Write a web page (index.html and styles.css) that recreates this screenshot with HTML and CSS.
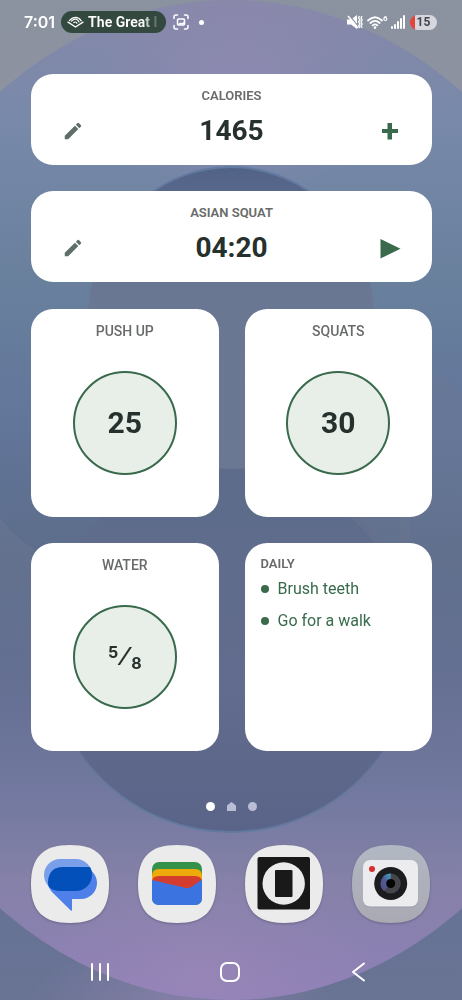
FILE: index.html
```html
<!DOCTYPE html>
<html lang="en">
<head>
    <meta charset="UTF-8">
    <meta name="viewport" content="width=device-width, initial-scale=1.0">
    <title>Home screen</title>
    <link rel="stylesheet" href="styles.css">
</head>
<body>
    <!-- wallpaper -->
    <svg class="wallpaper" viewBox="0 0 462 1000" preserveAspectRatio="none" aria-hidden="true">
        <defs>
            <linearGradient id="outer" x1="0" y1="0" x2="0" y2="1">
                <stop offset="0" stop-color="#8a919f"/>
                <stop offset=".1" stop-color="#8e93a1"/>
                <stop offset=".9" stop-color="#667395"/>
                <stop offset="1" stop-color="#697394"/>
            </linearGradient>
            <linearGradient id="big" x1="0" y1="0" x2="0" y2="1">
                <stop offset="0" stop-color="#8788aa"/>
                <stop offset=".12" stop-color="#7889a9"/>
                <stop offset=".28" stop-color="#69809d"/>
                <stop offset=".42" stop-color="#62769a"/>
                <stop offset=".55" stop-color="#5d6d8b"/>
                <stop offset=".68" stop-color="#646f92"/>
                <stop offset=".8" stop-color="#7379a0"/>
                <stop offset=".88" stop-color="#8581a8"/>
                <stop offset="1" stop-color="#8f80b8"/>
            </linearGradient>
            <linearGradient id="upper" x1="0" y1="0" x2="0" y2="1">
                <stop offset="0" stop-color="#526388"/>
                <stop offset=".4" stop-color="#6a7792"/>
                <stop offset="1" stop-color="#6a7893"/>
            </linearGradient>
            <linearGradient id="lower" x1="0" y1="0" x2="0" y2="1">
                <stop offset="0" stop-color="#5d6c8a"/>
                <stop offset=".6" stop-color="#626c8e"/>
                <stop offset="1" stop-color="#596488"/>
            </linearGradient>
            <linearGradient id="rim" x1="0" y1="0" x2="0" y2="1">
                <stop offset=".6" stop-color="#62799f" stop-opacity="0"/>
                <stop offset="1" stop-color="#62799f"/>
            </linearGradient>
            <linearGradient id="topRim" x1="0" y1="0" x2="0" y2="1">
                <stop offset="0" stop-color="#6279a0"/>
                <stop offset=".4" stop-color="#6279a0" stop-opacity="0"/>
            </linearGradient>
            <linearGradient id="wave" x1="0" y1="0" x2="0" y2="1">
                <stop offset="0" stop-color="#6c7894" stop-opacity=".5"/>
                <stop offset="1" stop-color="#6c7894" stop-opacity="0"/>
            </linearGradient>
            <radialGradient id="glow">
                <stop offset="0" stop-color="#a08ab8" stop-opacity=".5"/>
                <stop offset="1" stop-color="#a08ab8" stop-opacity="0"/>
            </radialGradient>
            <clipPath id="clip"><ellipse cx="231" cy="500" rx="400" ry="500"/></clipPath>
        </defs>
        <rect width="462" height="1000" fill="url(#outer)"/>
        <ellipse cx="180" cy="1000" rx="150" ry="60" fill="url(#glow)"/>
        <g clip-path="url(#clip)">
            <rect width="462" height="1000" fill="url(#big)"/>
            <ellipse cx="240" cy="90" rx="150" ry="110" fill="url(#glow)"/>
            <ellipse cx="200" cy="980" rx="180" ry="110" fill="url(#glow)"/>
            <path d="M400 355Q440 370 462 394V800H400Z" fill="url(#wave)"/>
            <path d="M0 518Q15 538 36 550V700H0Z" fill="url(#wave)"/>
        </g>
        <circle cx="231" cy="648" r="184" fill="url(#lower)" stroke="url(#rim)" stroke-width="2"/>
        <path d="M346 514Q362 526 376 546H410V514Z" fill="#6c7891" opacity=".4"/>
        <ellipse cx="231" cy="318" rx="143" ry="151" fill="url(#upper)" stroke="url(#topRim)" stroke-width="2"/>
    </svg>

    <!-- status bar -->
    <header class="status">
        <span class="time">7:01</span>
        <div class="pill">
            <svg width="17" height="12" viewBox="0 0 17 12" fill="none" stroke="#fff" stroke-width="1.4" stroke-linejoin="round" stroke-linecap="round">
                <path d="M1 6.200L8.500 11L16 6.200"/>
                <path d="M2.500 4.500C6 .500 11 0 14.200 4.800M4.500 5.200C7.500 2 10.500 2.800 12 6M6.800 6.600C8.300 5.500 9.200 6 9.900 7.300" stroke-width="1.200"/>
            </svg>
            <span class="pill-text">The Great I</span>
        </div>
        <svg class="shot" width="16" height="16" viewBox="0 0 16 16" fill="none" stroke="#fff" stroke-width="1.5" stroke-linecap="round">
            <path d="M1 4.500V3Q1 1 3 1H4.500M11.500 1H13Q15 1 15 3V4.500M15 11.500V13Q15 15 13 15H11.500M4.500 15H3Q1 15 1 13V11.500"/>
            <rect x="4.500" y="5" width="7" height="6" rx="1"/>
            <path d="M5 10L7.500 8.500L9 9.300L11 7.500V10.500H5Z" fill="#fff" stroke="none"/>
        </svg>
        <span class="more"></span>

        <div class="status-right">
            <svg width="16" height="14" viewBox="0 0 16 14" fill="#fff">
                <path d="M0 4.500H4L10 0V14L4 9.500H0Z"/>
                <path d="M2 0L11 11" stroke="#8d8fae" stroke-width="1.200"/>
                <path d="M1 1L11 13" stroke="#fff" stroke-width="1.500"/>
                <path d="M12.500 1L11.500 3L13 5L11.500 7L13 9L11.500 11L13 13M15 1L14 3L15.200 5L14 7L15.200 9L14 11L15.200 13" fill="none" stroke="#fff" stroke-width="1.300"/>
            </svg>
            <svg class="wifi" width="16" height="13" viewBox="0 0 16 13" fill="none" stroke="#fff" stroke-width="1.800" stroke-linecap="round">
                <path d="M1 4.500Q8 -2 15 4.500M3.400 7Q8 2.800 12.600 7M5.700 9.400Q8 7.400 10.300 9.400"/>
                <circle cx="8" cy="11.600" r="1.300" fill="#fff" stroke="none"/>
            </svg>
            <span class="wifi-gen">6</span>
            <svg width="15" height="14" viewBox="0 0 15 14" fill="#fff">
                <rect x="0" y="11" width="2" height="3" rx="1"/>
                <rect x="3" y="9" width="2" height="5" rx="1"/>
                <rect x="6" y="6" width="2" height="8" rx="1"/>
                <rect x="9" y="3" width="2" height="11" rx="1"/>
                <rect x="12" y="0" width="2" height="14" rx="1"/>
            </svg>
            <span class="battery">15</span>
        </div>
    </header>

    <!-- widgets -->
    <main class="widgets">
        <section class="card wide">
            <h2>CALORIES</h2>
            <div class="wide-row">
                <button class="icon-btn" aria-label="Edit calories">
                    <svg width="22" height="22" viewBox="0 0 24 24" fill="#5f6e68"><path d="M3 17.250V21h3.750L17.810 9.940l-3.750-3.750L3 17.250zM20.710 7.040a1 1 0 0 0 0-1.410l-2.340-2.340a1 1 0 0 0-1.410 0l-1.830 1.830 3.750 3.750 1.830-1.830z"/></svg>
                </button>
                <span class="value">1465</span>
                <button class="icon-btn" aria-label="Add calories">
                    <svg width="22" height="22" viewBox="0 0 22 22" fill="#386a4b"><path d="M8.500 3H13V9H19V13H13V19.500H8.500V13H3V9H8.500Z"/></svg>
                </button>
            </div>
        </section>

        <section class="card wide">
            <h2>ASIAN SQUAT</h2>
            <div class="wide-row">
                <button class="icon-btn" aria-label="Edit timer">
                    <svg width="22" height="22" viewBox="0 0 24 24" fill="#5f6e68"><path d="M3 17.250V21h3.750L17.810 9.940l-3.750-3.750L3 17.250zM20.710 7.040a1 1 0 0 0 0-1.410l-2.340-2.340a1 1 0 0 0-1.410 0l-1.830 1.830 3.750 3.750 1.830-1.830z"/></svg>
                </button>
                <span class="value">04:20</span>
                <button class="icon-btn" aria-label="Start timer">
                    <svg width="22" height="22" viewBox="0 0 22 22" fill="#386a4b"><path d="M1.500 2L21.500 11.800L1.500 21.500Z"/></svg>
                </button>
            </div>
        </section>

        <div class="grid">
            <section class="card square">
                <h2>PUSH UP</h2>
                <div class="center"><button class="counter">25</button></div>
            </section>
            <section class="card square">
                <h2>SQUATS</h2>
                <div class="center"><button class="counter">30</button></div>
            </section>
            <section class="card square">
                <h2>WATER</h2>
                <div class="center">
                    <button class="counter fraction"><span class="num">5</span><span class="slash">⁄</span><span class="den">8</span></button>
                </div>
            </section>
            <section class="card daily">
                <h2>DAILY</h2>
                <ul>
                    <li>Brush teeth</li>
                    <li>Go for a walk</li>
                </ul>
            </section>
        </div>
    </main>

    <!-- page indicator -->
    <div class="pages">
        <span class="dot active"></span>
        <svg width="9" height="9" viewBox="0 0 9 9" fill="#b9bdd5"><path d="M4.500 0L9 3.500V8.500Q9 9 8.500 9H.500Q0 9 0 8.500V3.500Z"/></svg>
        <span class="dot"></span>
    </div>

    <!-- dock -->
    <nav class="dock">
        <a href="#" aria-label="Messages">
            <svg width="78" height="78" viewBox="0 0 78 78">
                <path class="tile" d="M39 0C66 0 78 12 78 39S66 78 39 78 0 66 0 39 12 0 39 0Z"/>
                <rect x="13" y="14" width="48" height="32" rx="16" fill="#7a9fea"/>
                <path d="M33 22H50A16 16 0 0 1 50 54H41V64.500Q41 66.500 39.500 65.200L21 47Q17 42 17 38Q17 22 33 22Z" fill="#4f80ea"/>
                <path d="M32 22H59Q61 25 61 30A16 16 0 0 1 45 46H29Q22 46 18 42Q17 40 17 37Q18 22 32 22Z" fill="#0450ba"/>
            </svg>
        </a>
        <a href="#" aria-label="Wallet">
            <svg width="78" height="78" viewBox="0 0 78 78">
                <path class="tile" d="M39 0C66 0 78 12 78 39S66 78 39 78 0 66 0 39 12 0 39 0Z"/>
                <rect x="14" y="17" width="50" height="43" rx="7" fill="#339149"/>
                <path d="M14 31Q14 24 21 24H57Q64 24 64 31V45H14Z" fill="#eeaa0b"/>
                <path d="M14 37Q14 31 21 31H57Q64 31 64 37V50H14Z" fill="#d43d2e"/>
                <path d="M14 35L48 43Q51 43.500 54 41.500L64 34.500V53Q64 60 57 60H21Q14 60 14 53Z" fill="#3b74e0"/>
            </svg>
        </a>
        <a href="#" aria-label="Launcher">
            <svg width="78" height="78" viewBox="0 0 78 78">
                <path class="tile" d="M39 0C66 0 78 12 78 39S66 78 39 78 0 66 0 39 12 0 39 0Z"/>
                <rect x="12.500" y="12" width="52.500" height="52.500" rx="2" fill="#191919"/>
                <circle cx="38.700" cy="38.500" r="21.200" fill="#ebebeb"/>
                <rect x="30" y="25" width="17.500" height="27" rx="1" fill="#191919"/>
            </svg>
        </a>
        <a href="#" aria-label="Camera">
            <svg width="78" height="78" viewBox="0 0 78 78">
                <defs>
                    <linearGradient id="cam" x1="0" y1="0" x2="0" y2="1">
                        <stop offset="0" stop-color="#b2b8c3"/>
                        <stop offset="1" stop-color="#a9a9b3"/>
                    </linearGradient>
                    <linearGradient id="lens" x1="1" y1="0" x2="0" y2="1">
                        <stop offset="0" stop-color="#3fa6c4"/>
                        <stop offset=".5" stop-color="#4c5a94"/>
                        <stop offset="1" stop-color="#5b4a86"/>
                    </linearGradient>
                </defs>
                <path d="M39 0C66 0 78 12 78 39S66 78 39 78 0 66 0 39 12 0 39 0Z" fill="url(#cam)"/>
                <rect x="11" y="16" width="55" height="46.500" rx="7" fill="#9a9ca5"/>
                <rect x="11" y="15" width="55" height="46.500" rx="7" fill="#ececee"/>
                <circle cx="20" cy="24" r="3" fill="#d62f2f"/>
                <circle cx="38.700" cy="38.500" r="16.500" fill="#1b1c1e"/>
                <circle cx="38.700" cy="38.500" r="10" fill="#45464b"/>
                <path d="M38.700 38.500V28.500A10 10 0 0 0 32 46Z" fill="url(#lens)"/>
                <circle cx="38.700" cy="38.500" r="4.500" fill="#050506"/>
            </svg>
        </a>
    </nav>

    <!-- system navigation -->
    <footer class="sysnav">
        <button aria-label="Recent apps"><svg width="20" height="20" viewBox="0 0 20 20" fill="none" stroke="#fff" stroke-width="2" stroke-linecap="round"><path d="M2 2V18M10 2V18M18 2V18"/></svg></button>
        <button aria-label="Home"><svg width="20" height="20" viewBox="0 0 20 20" fill="none" stroke="#fff" stroke-width="2"><rect x="1" y="1" width="18" height="18" rx="6"/></svg></button>
        <button aria-label="Back"><svg width="20" height="20" viewBox="0 0 20 20" fill="none" stroke="#fff" stroke-width="2" stroke-linecap="round" stroke-linejoin="round"><path d="M15 1.500L4 10L15 18.500"/></svg></button>
    </footer>
</body>
</html>
```
FILE: styles.css
```css
* {
    box-sizing: border-box;
}

body {
    margin: 0;
    min-height: 100vh;
    display: flex;
    flex-direction: column;
    font-family: Roboto, "Liberation Sans", sans-serif;
    color: #26302c;
}

svg {
    display: block;
}

button {
    padding: 0;
    border: none;
    background: none;
    font-family: inherit;
    color: inherit;
    cursor: pointer;
}

.wallpaper {
    position: fixed;
    z-index: -1;
    left: 0;
    top: 0;
    width: 100%;
    height: 100%;
}

/* status bar */
.status {
    display: flex;
    align-items: center;
    height: 44px;
    padding: 0 25px 0 24px;
    color: #fff;
}

.time {
    font-family: Inter, sans-serif;
    font-size: 16px;
    font-weight: 600;
}

.pill {
    display: flex;
    align-items: center;
    gap: 4px;
    width: 105px;
    height: 22px;
    margin-left: 6px;
    padding: 0 6px;
    border-radius: 11px;
    background: #33483f;
}

.pill-text {
    flex: 1;
    overflow: hidden;
    white-space: nowrap;
    font-size: 14px;
    font-weight: 700;
    background: linear-gradient(to right, #fff 76%, #33483f);
    background-clip: text;
    color: transparent;
}

.shot {
    margin-left: 7px;
}

.more {
    width: 5px;
    height: 5px;
    margin-left: 10px;
    border-radius: 50%;
    background: #fff;
}

.status-right {
    display: flex;
    align-items: center;
    margin-left: auto;
}

.wifi {
    margin-left: 4px;
}

.wifi-gen {
    align-self: flex-start;
    width: 8px;
    font-size: 8px;
    line-height: 8px;
    font-weight: 700;
}

.battery {
    width: 27px;
    height: 15px;
    margin-left: 4px;
    border-radius: 8px;
    background: linear-gradient(to right, #e5443a 5px, #d5d6de 5px);
    font-size: 12px;
    line-height: 15px;
    font-weight: 700;
    text-align: center;
    color: #44464d;
}

/* widgets */
.widgets {
    display: flex;
    flex-direction: column;
    gap: 26px;
    padding: 30px 30px 0 31px;
}

.card {
    display: flex;
    flex-direction: column;
    border-radius: 22px;
    background: #fff;
}

.card h2 {
    margin: 0;
    font-size: 13px;
    line-height: 16px;
    font-weight: 600;
    text-align: center;
    color: #686b69;
}

.wide {
    gap: 11px;
    padding: 14px 31px 18px;
}

.wide-row {
    display: flex;
    align-items: center;
    justify-content: space-between;
}

.value {
    font-size: 28px;
    line-height: 32px;
    font-weight: 700;
}

.grid {
    display: grid;
    grid-template-columns: 1fr 1fr;
    gap: 26px;
    padding-top: 1px;
}

.square,
.daily {
    min-height: 208px;
}

.square {
    padding: 14px 16px 11px;
}

.square h2 {
    font-size: 14px;
    font-weight: 500;
}

.center {
    flex: 1;
    display: flex;
    align-items: center;
    justify-content: center;
}

.counter {
    width: 104px;
    height: 104px;
    border: 2px solid #386a4b;
    border-radius: 50%;
    background: #e8eee8;
    font-size: 30px;
    font-weight: 700;
}

.fraction {
    display: flex;
    align-items: center;
    justify-content: center;
    gap: 4px;
    font-family: Inter, sans-serif;
    font-size: 16px;
}

.num {
    padding-bottom: 10px;
}

.den {
    padding-top: 12px;
}

.slash {
    font-size: 24px;
}

.daily {
    padding: 13px 16px;
    gap: 1px;
}

.daily h2 {
    text-align: left;
}

.daily ul {
    margin: 0;
    padding: 0;
    list-style: none;
}

.daily li {
    display: flex;
    align-items: center;
    gap: 9px;
    font-size: 16px;
    line-height: 32px;
    color: #386a4b;
}

.daily li::before {
    content: "";
    width: 8px;
    height: 8px;
    border-radius: 50%;
    background: #386a4b;
}

/* page indicator */
.pages {
    display: flex;
    justify-content: center;
    gap: 12px;
    padding: 51px 0 34px;
}

.dot {
    width: 9px;
    height: 9px;
    border-radius: 50%;
    background: #b9bdd5;
}

.dot.active {
    background: #fff;
}

/* dock */
.dock {
    display: flex;
    justify-content: space-between;
    padding: 0 32px 0 31px;
}

.tile {
    fill: #ebebeb;
}

.dock svg {
    filter: drop-shadow(0 1px 1px rgba(60, 60, 80, 0.4));
}

.sysnav {
    display: flex;
    justify-content: space-between;
    padding: 39px 93px 17px 90px;
}
```
